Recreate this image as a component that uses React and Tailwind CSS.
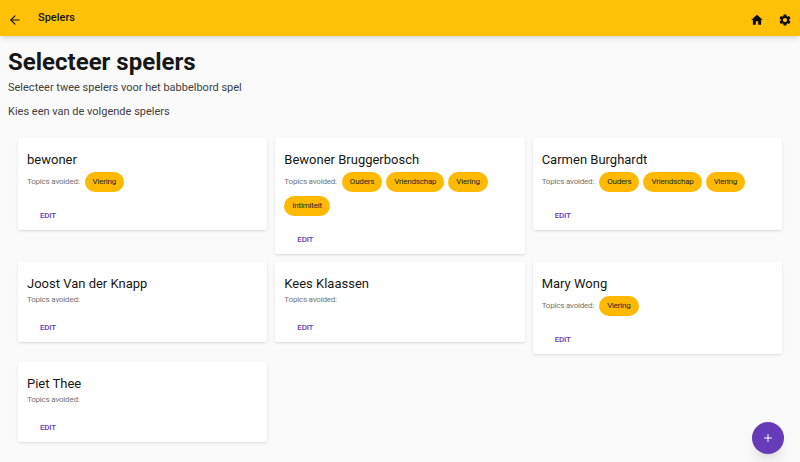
import React from "react";
import { ArrowLeft, Plus } from "lucide-react";

const PLAYERS = [
  { name: "bewoner", topics: ["Viering"] },
  { name: "Bewoner Bruggerbosch", topics: ["Ouders", "Vriendschap", "Viering", "Intimiteit"] },
  { name: "Carmen Burghardt", topics: ["Ouders", "Vriendschap", "Viering"] },
  { name: "Joost Van der Knapp", topics: [] },
  { name: "Kees Klaassen", topics: [] },
  { name: "Mary Wong", topics: ["Viering"] },
  { name: "Piet Thee", topics: [] },
];

function PlayerCard({ player }) {
  return (
    <div className="bg-white rounded-xs shadow px-2 pt-3 pb-1.5">
      <h2 className="px-px text-[13px] leading-5 text-neutral-900">{player.name}</h2>
      <div className="flex flex-wrap items-center gap-x-1 px-px">
        <span className="mr-px text-[8px] leading-3 tracking-tight text-neutral-500">Topics avoided:</span>
        {player.topics.map((t) => (
          <span
            key={t}
            className="my-0.5 rounded-full bg-amber-400 px-2 py-1 text-[8px] leading-3 tracking-tight text-neutral-800"
          >
            {t}
          </span>
        ))}
      </div>
      <div className="mt-3.5 px-3.5">
        <button className="block text-[8px] leading-4 font-medium tracking-tight text-[#673ab7]">EDIT</button>
      </div>
    </div>
  );
}

export default function App() {
  return (
    <div className="relative h-screen overflow-hidden bg-neutral-50 font-['Roboto',sans-serif]">
      <header className="flex items-center h-9 bg-[#ffc107] shadow-md pt-1 px-2">
        <ArrowLeft className="w-3.5 h-3.5 text-neutral-900" />
        <span className="ml-4 mb-1 text-[11px] font-medium text-neutral-900">Spelers</span>
        <div className="ml-auto flex items-center gap-3.5">
          <svg viewBox="0 0 24 24" className="w-3.5 h-3.5 fill-neutral-950">
            <path d="M10 20v-6h4v6h5v-8h3L12 3 2 12h3v8z" />
          </svg>
          <svg viewBox="0 0 24 24" className="w-3.5 h-3.5 fill-neutral-950">
            <path d="M19.14 12.94c.04-.3.06-.61.06-.94 0-.32-.02-.64-.07-.94l2.03-1.58a.49.49 0 0 0 .12-.61l-1.92-3.32a.488.488 0 0 0-.59-.22l-2.39.96c-.5-.38-1.03-.7-1.62-.94l-.36-2.54a.484.484 0 0 0-.48-.41h-3.84c-.24 0-.43.17-.47.41l-.36 2.54c-.59.24-1.13.57-1.62.94l-2.39-.96c-.22-.08-.47 0-.59.22L2.74 8.87c-.12.21-.08.47.12.61l2.03 1.58c-.05.3-.09.63-.09.94s.02.64.07.94l-2.03 1.58a.49.49 0 0 0-.12.61l1.92 3.32c.12.22.37.29.59.22l2.39-.96c.5.38 1.03.7 1.62.94l.36 2.54c.05.24.24.41.48.41h3.84c.24 0 .44-.17.47-.41l.36-2.54c.59-.24 1.13-.56 1.62-.94l2.39.96c.22.08.47 0 .59-.22l1.92-3.32c.12-.22.07-.47-.12-.61l-2.01-1.58zM12 15.6c-1.98 0-3.6-1.62-3.6-3.6s1.62-3.6 3.6-3.6 3.6 1.62 3.6 3.6-1.62 3.6-3.6 3.6z" />
          </svg>
        </div>
      </header>

      <main className="px-2 pt-3">
        <h1 className="text-2xl font-bold leading-7 text-neutral-900">Selecteer spelers</h1>
        <p className="mt-1 text-[11px] leading-4 text-neutral-700">Selecteer twee spelers voor het babbelbord spel</p>
        <p className="mt-2 text-[11px] leading-4 text-neutral-700">Kies een van de volgende spelers</p>

        <div className="grid grid-cols-3 items-start gap-2 mt-4.5 px-2.5">
          {PLAYERS.map((p) => (
            <PlayerCard key={p.name} player={p} />
          ))}
        </div>
      </main>

      <button className="absolute right-4 bottom-2 flex items-center justify-center w-8 h-8 rounded-full bg-[#673ab7] text-white shadow-lg">
        <Plus className="w-3 h-3" />
      </button>
    </div>
  );
}
